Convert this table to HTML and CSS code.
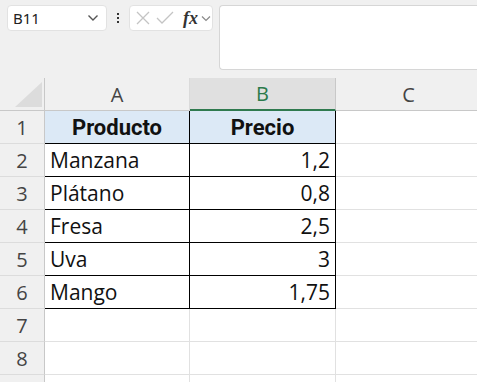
FILE: index.html
```html
<!DOCTYPE html>
<html lang="es">
<head>
<meta charset="utf-8">
<link rel="stylesheet" href="styles.css">
</head>
<body>
<div class="toolbar">
  <div class="namebox">
    <span class="ref">B11</span>
    <svg class="chev" width="12" height="8" viewBox="0 0 12 8"><path d="M1.5 1.5 L6 6 L10.5 1.5" fill="none" stroke="#555" stroke-width="1.4"/></svg>
  </div>
  <div class="dots"><i></i><i></i><i></i></div>
  <div class="funcbox">
    <svg width="14" height="14" viewBox="0 0 14 14"><path d="M1 1 L13 13 M13 1 L1 13" stroke="#c4c4c4" stroke-width="1.3" fill="none"/></svg>
    <svg width="18" height="14" viewBox="0 0 18 14"><path d="M1 7 L6 12 L17 1" stroke="#c4c4c4" stroke-width="1.3" fill="none"/></svg>
    <span class="fx">fx</span>
    <svg class="chev2" width="10" height="7" viewBox="0 0 10 7"><path d="M1 1.5 L5 5.5 L9 1.5" fill="none" stroke="#8a8a8a" stroke-width="1.2"/></svg>
  </div>
  <div class="formula"></div>
</div>
<div class="sheet">
  <div class="grid">
    <div class="corner"><span class="tri"></span></div>
    <div class="colh">A</div>
    <div class="colh sel">B</div>
    <div class="colh">C</div>

    <div class="rowh">1</div>
    <div class="cell t head">Producto</div>
    <div class="cell t head tb">Precio</div>
    <div class="cell"></div>

    <div class="rowh">2</div>
    <div class="cell t">Manzana</div>
    <div class="cell t tb num">1,2</div>
    <div class="cell"></div>

    <div class="rowh">3</div>
    <div class="cell t">Plátano</div>
    <div class="cell t tb num">0,8</div>
    <div class="cell"></div>

    <div class="rowh">4</div>
    <div class="cell t">Fresa</div>
    <div class="cell t tb num">2,5</div>
    <div class="cell"></div>

    <div class="rowh">5</div>
    <div class="cell t">Uva</div>
    <div class="cell t tb num">3</div>
    <div class="cell"></div>

    <div class="rowh">6</div>
    <div class="cell t">Mango</div>
    <div class="cell t tb num">1,75</div>
    <div class="cell"></div>

    <div class="rowh">7</div>
    <div class="cell"></div>
    <div class="cell"></div>
    <div class="cell"></div>

    <div class="rowh">8</div>
    <div class="cell"></div>
    <div class="cell"></div>
    <div class="cell"></div>

    <div class="rowh"></div>
    <div class="cell"></div>
    <div class="cell"></div>
    <div class="cell"></div>
  </div>
</div>
</body>
</html>
```

FILE: styles.css
```css
* { box-sizing: border-box; }
html, body {
  margin: 0;
  width: 477px;
  height: 382px;
  overflow: hidden;
  background: #f0f0f0;
  font-family: "Open Sans", "Noto Sans", sans-serif;
}
.toolbar {
  display: flex;
  align-items: flex-start;
  height: 78px;
  padding: 5px 0 0 7px;
}
.namebox {
  width: 100px;
  height: 26px;
  background: #fff;
  border: 1px solid #e2e2e2;
  border-radius: 4px;
  display: flex;
  align-items: center;
  justify-content: space-between;
  padding: 0 7px 0 5px;
}
.ref {
  font-family: "Noto Sans", sans-serif;
  font-size: 15px;
  color: #222;
}
.dots {
  width: 22px;
  height: 26px;
  display: flex;
  flex-direction: column;
  align-items: center;
  justify-content: center;
  gap: 2px;
}
.dots i {
  width: 2px;
  height: 2px;
  background: #333;
  display: block;
}
.funcbox {
  width: 84px;
  height: 26px;
  background: #fff;
  border: 1px solid #e2e2e2;
  border-radius: 4px;
  display: flex;
  align-items: center;
  padding: 0 0 0 6px;
  gap: 6px;
}
.fx {
  font-family: "Liberation Serif", serif;
  font-style: italic;
  font-weight: 700;
  font-size: 18px;
  color: #333;
  margin-left: 3px;
  line-height: 1;
}
.chev2 { margin-left: -3px; }
.formula {
  flex: 1;
  height: 65px;
  margin-left: 6px;
  background: #fff;
  border: 1px solid #d6d6d6;
  border-right: none;
  border-radius: 4px 0 0 4px;
}
.sheet {
  width: 477px;
  overflow: hidden;
}
.grid {
  display: grid;
  grid-template-columns: 45px 145px 146px 146px;
  grid-auto-rows: 33px;
  width: 482px;
  background: #fff;
}
.corner {
  background: #f0f0f0;
  border-right: 1px solid #c8c8c8;
  border-bottom: 1px solid #c8c8c8;
  position: relative;
}
.tri {
  position: absolute;
  right: 2px;
  bottom: 3px;
  width: 0;
  height: 0;
  border-left: 27px solid transparent;
  border-bottom: 25px solid #dcdcdc;
}
.colh {
  background: #f0f0f0;
  border-right: 1px solid #dadada;
  border-bottom: 1px solid #c8c8c8;
  display: flex;
  align-items: center;
  justify-content: center;
  font-size: 20px;
  color: #444;
}
.colh.sel {
  background: #e0e0e0;
  color: #2b7a4b;
  border-bottom: 2px solid #2f7a4f;
  border-right-color: #c8c8c8;
}
.rowh {
  background: #f0f0f0;
  border-right: 1px solid #c8c8c8;
  border-bottom: 1px solid #dcdcdc;
  display: flex;
  align-items: center;
  justify-content: center;
  font-size: 20px;
  color: #444;
}
.cell {
  border-right: 1px solid #e1e1e1;
  border-bottom: 1px solid #e1e1e1;
  display: flex;
  align-items: center;
  padding: 0 5px;
  font-size: 21px;
  color: #111;
  white-space: nowrap;
}
.cell.t {
  border-bottom-color: #000;
  border-right-color: #000;
}
.cell.tb {
  border-left: 1px solid #000;
  margin-left: -1px;
}
.cell.head {
  background: #dce9f6;
  font-family: "Roboto", sans-serif;
  font-weight: 700;
  font-size: 22px;
  justify-content: center;
}
.cell.num {
  justify-content: flex-end;
}
```
